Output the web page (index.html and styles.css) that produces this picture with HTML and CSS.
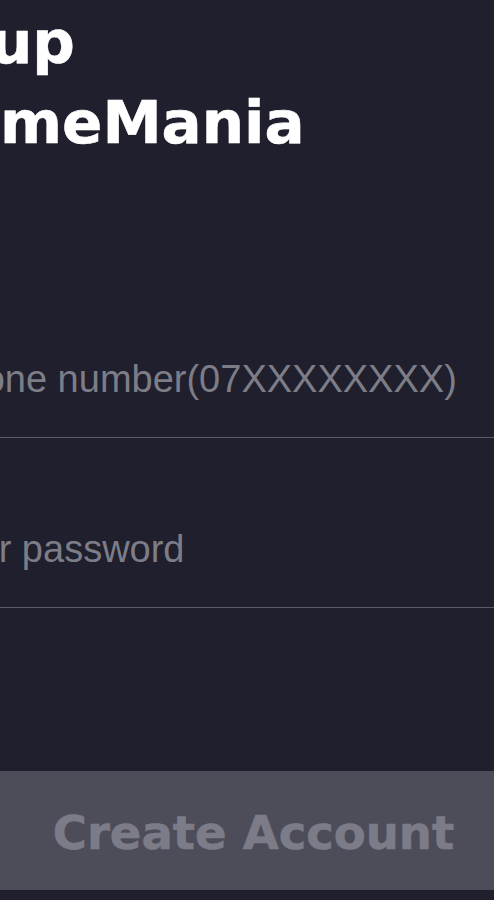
FILE: index.html
```html
<!DOCTYPE html>
<html lang="en">
<head>
    <meta charset="UTF-8">
    <meta name="viewport" content="width=device-width, initial-scale=1.0">
    <title>Sign up - GameMania</title>
    <link rel="stylesheet" href="styles.css">
</head>
<body>
<div class="screen">
    <h1 class="title">Sign up<br>to GameMania</h1>

    <form class="signup-form" onsubmit="return false;">
        <input class="field" type="tel" placeholder="Enter phone number(07XXXXXXXX)">
        <input class="field field-pass" type="password" placeholder="Enter your password">
        <button class="create-btn" type="submit" disabled>Create Account</button>
    </form>
</div>
</body>
</html>
```

FILE: styles.css
```css
    html, body {
        margin: 0;
        background: #1f1f2d;
        overflow: hidden;
    }
    body {
        font-family: "Liberation Sans", Arial, sans-serif;
    }
    .screen {
        width: 827px;
        margin-left: -160px;
        box-sizing: border-box;
    }
    .title {
        margin: 3px 0 0 -19px;
        font-family: "DejaVu Sans", "Liberation Sans", sans-serif;
        font-size: 59.5px;
        line-height: 80px;
        font-weight: bold;
        color: #fff;
        -webkit-text-stroke: 0.6px #fff;
        white-space: nowrap;
    }
    .signup-form {
        display: flex;
        flex-direction: column;
        margin-top: 159px;
    }
    .field {
        height: 115px;
        padding: 0;
        margin: 0;
        border: none;
        border-bottom: 1px solid #5b5b67;
        background: transparent;
        font-family: "Liberation Sans", Arial, sans-serif;
        font-size: 38px;
        color: #fff;
        outline: none;
    }
    .field + .field {
        margin-top: 54px;
    }
    .field-pass {
        text-indent: -4px;
    }
    .field::placeholder {
        color: #7d7d87;
    }
    .create-btn {
        margin-top: 163px;
        height: 119px;
        padding: 35px 0 29px;
        border: none;
        background: #4d4d59;
        color: #7c7c88;
        font-family: "DejaVu Sans", "Liberation Sans", sans-serif;
        font-size: 46.5px;
        font-weight: bold;
        -webkit-text-stroke: 0.6px #7c7c88;
        line-height: 55px;
    }
```
